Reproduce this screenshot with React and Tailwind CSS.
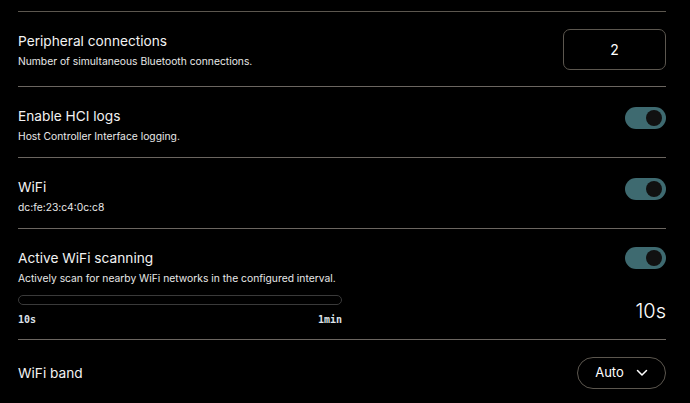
import React from "react";

const font = { fontFamily: "Inter, 'Noto Sans', sans-serif" };

function Toggle() {
  return (
    <div className="relative w-[41px] h-[22px] rounded-full bg-[#3e6a70] shrink-0">
      <div className="absolute right-[4px] top-[3px] w-[16px] h-[16px] rounded-full bg-[#111111]" />
    </div>
  );
}

function Title({ children }) {
  return <div className="text-[13.7px] leading-[20px] text-[#f2f2f2]">{children}</div>;
}
function Sub({ children }) {
  return <div className="text-[10.3px] leading-[14px] text-[#e8e8e8] mt-[3px]">{children}</div>;
}

export default function App() {
  return (
    <div className="w-[690px] h-[403px] bg-black overflow-hidden" style={font}>
      <div className="mx-[18px] w-[648px] pt-[11px]">
        <div className="border-t border-[#5c574f]" />
        {/* Peripheral */}
        <div className="flex items-center justify-between h-[74px]">
          <div>
            <Title>Peripheral connections</Title>
            <Sub>Number of simultaneous Bluetooth connections.</Sub>
          </div>
          <div className="w-[103px] h-[41px] rounded-[7px] border border-[#5c574f] flex items-center justify-center text-[14px] text-white">
            2
          </div>
        </div>
        <div className="border-t border-[#6b6660]" />
        {/* HCI */}
        <div className="flex items-start justify-between h-[70px] pt-[19px]">
          <div>
            <Title>Enable HCI logs</Title>
            <Sub>Host Controller Interface logging.</Sub>
          </div>
          <div className="mt-[1px]"><Toggle /></div>
        </div>
        <div className="border-t border-[#6b6660]" />
        {/* WiFi */}
        <div className="flex items-start justify-between h-[70px] pt-[19px]">
          <div>
            <Title>WiFi</Title>
            <Sub>dc:fe:23:c4:0c:c8</Sub>
          </div>
          <div className="mt-[1px]"><Toggle /></div>
        </div>
        <div className="border-t border-[#6b6660]" />
        {/* Active scanning */}
        <div className="h-[110px] pt-[19px]">
          <div className="flex items-start justify-between">
            <div>
              <Title>Active WiFi scanning</Title>
              <Sub>Actively scan for nearby WiFi networks in the configured interval.</Sub>
            </div>
            <div className="mt-[-1px]"><Toggle /></div>
          </div>
          <div className="flex items-center justify-between mt-[10px]">
            <div className="w-[324px]">
              <div className="h-[10px] rounded-full border border-[#3a3a3a]" />
              <div className="flex justify-between mt-[9px] text-[10px] leading-[12px] text-[#dde3ea] font-bold" style={{ fontFamily: "'DejaVu Sans Mono', monospace" }}>
                <span>10s</span>
                <span>1min</span>
              </div>
            </div>
            <div className="text-[20px] leading-[24px] font-light text-white">10s</div>
          </div>
        </div>
        <div className="border-t border-[#6b6660]" />
        {/* WiFi band */}
        <div className="flex items-center justify-between h-[65px]">
          <Title>WiFi band</Title>
          <div className="w-[89px] h-[32px] rounded-full border border-[#5c574f] flex items-center justify-center gap-[12px] text-[13px] text-white">
            <span>Auto</span>
            <svg width="12" height="8" viewBox="0 0 12 8" fill="none" stroke="white" strokeWidth="1.5" strokeLinecap="round" strokeLinejoin="round">
              <path d="M1.5 1.5 L6 6 L10.5 1.5" />
            </svg>
          </div>
        </div>
      </div>
    </div>
  );
}
